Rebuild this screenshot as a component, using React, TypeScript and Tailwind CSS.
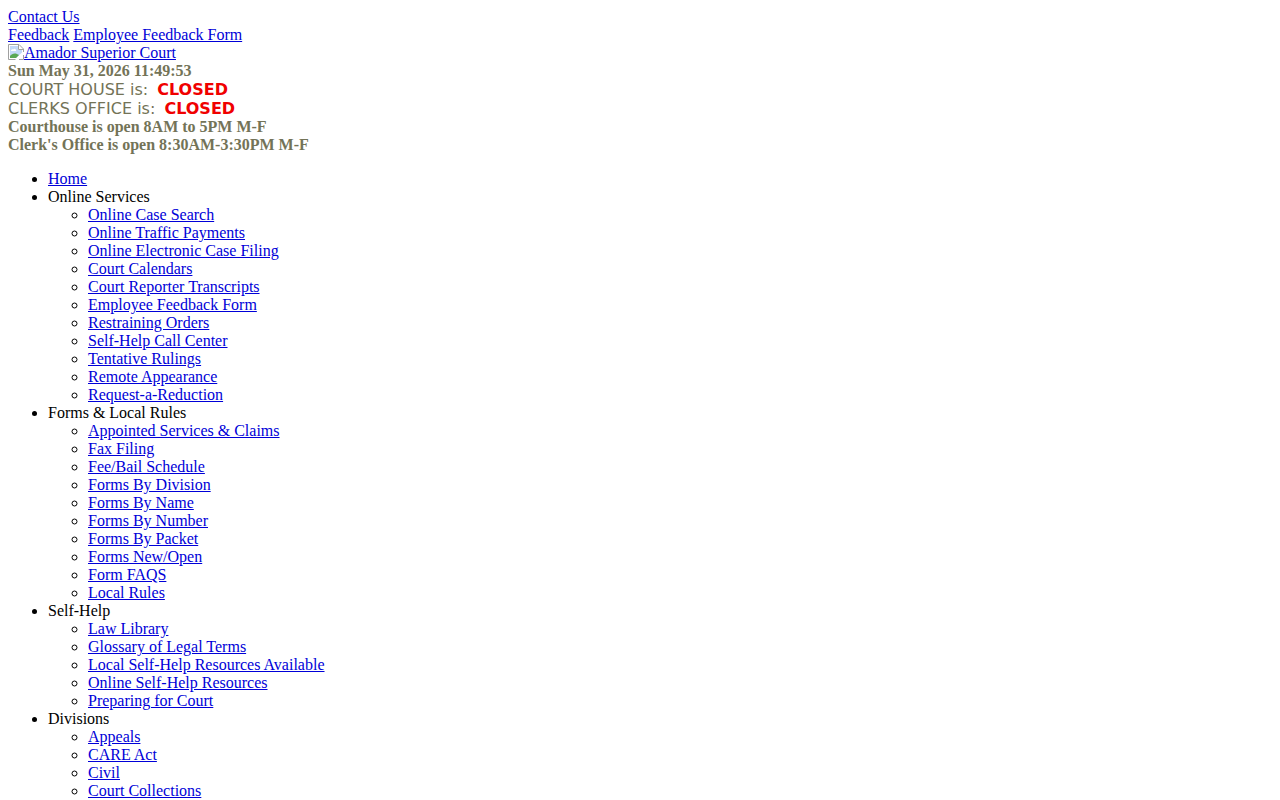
import React from "react";

type MenuSection = {
  title: string;
  href?: string;
  items?: string[];
};

const menu: MenuSection[] = [
  { title: "Home", href: "#home" },
  {
    title: "Online Services",
    items: [
      "Online Case Search",
      "Online Traffic Payments",
      "Online Electronic Case Filing",
      "Court Calendars",
      "Court Reporter Transcripts",
      "Employee Feedback Form",
      "Restraining Orders",
      "Self-Help Call Center",
      "Tentative Rulings",
      "Remote Appearance",
      "Request-a-Reduction",
    ],
  },
  {
    title: "Forms & Local Rules",
    items: [
      "Appointed Services & Claims",
      "Fax Filing",
      "Fee/Bail Schedule",
      "Forms By Division",
      "Forms By Name",
      "Forms By Number",
      "Forms By Packet",
      "Forms New/Open",
      "Form FAQS",
      "Local Rules",
    ],
  },
  {
    title: "Self-Help",
    items: [
      "Law Library",
      "Glossary of Legal Terms",
      "Local Self-Help Resources Available",
      "Online Self-Help Resources",
      "Preparing for Court",
    ],
  },
  {
    title: "Divisions",
    items: ["Appeals", "CARE Act", "Civil", "Court Collections"],
  },
];

const TextLink = ({
  href = "#",
  children,
}: {
  href?: string;
  children: React.ReactNode;
}) => (
  <a href={href} className="text-[#0000d8] underline">
    {children}
  </a>
);

const BrokenImageIcon = () => (
  <svg
    width="16"
    height="16"
    viewBox="0 0 16 16"
    className="inline-block align-top"
    aria-hidden="true"
  >
    <path d="M0.5 0.5H11L15.5 5V15.5H0.5Z" fill="#fff" />
    <path d="M2 2H10V6H14V8.5L8 14H2Z" fill="#c3d9f7" />
    <path d="M3 7C3 5.5 4.4 5 5.2 5.4C6 4 8.2 4.6 8.2 7Z" fill="#fff" />
    <path d="M2 14V12C4 9 8 8.5 11 11L8 14Z" fill="#5aa854" />
    <path d="M7.5 16L16 8V10.5L10.5 16Z" fill="#fff" />
    <path
      d="M7.5 15.5H0.5V0.5H11L15.5 5V8M10.5 0.5V5.5H15.5M15.5 11V15.5H11"
      fill="none"
      stroke="#a0a0a0"
    />
  </svg>
);

const StatusLine = ({ label, status }: { label: string; status: string }) => (
  <div className="font-[Verdana,'DejaVu_Sans',sans-serif] leading-[19px]">
    {label} is: <b className="ml-1 text-[#f00000]">{status}</b>
  </div>
);

const Header = () => (
  <header>
    <div>
      <TextLink href="#contact">Contact Us</TextLink>
    </div>
    <div>
      <TextLink href="#feedback">Feedback</TextLink>{" "}
      <TextLink href="#employee-feedback">Employee Feedback Form</TextLink>
    </div>
    <div>
      <TextLink href="#home">
        <BrokenImageIcon />
        Amador Superior Court
      </TextLink>
    </div>
    <div className="text-[#737357]">
      <div className="font-bold">Sun May 31, 2026 11:49:53</div>
      <StatusLine label="COURT HOUSE" status="CLOSED" />
      <StatusLine label="CLERKS OFFICE" status="CLOSED" />
      <div className="font-bold">Courthouse is open 8AM to 5PM M-F</div>
      <div className="font-bold">Clerk's Office is open 8:30AM-3:30PM M-F</div>
    </div>
  </header>
);

const App = () => {
  return (
    <div className="bg-white px-2 pt-2 font-['Liberation_Serif',serif] text-base leading-[18px] text-black">
      <Header />
      <nav className="mt-4">
        <ul className="list-disc pl-10">
          {menu.map((section) => (
            <li key={section.title}>
              {section.href ? (
                <TextLink href={section.href}>{section.title}</TextLink>
              ) : (
                section.title
              )}
              {section.items && (
                <ul className="list-[circle] pl-10">
                  {section.items.map((item) => (
                    <li key={item}>
                      <TextLink>{item}</TextLink>
                    </li>
                  ))}
                </ul>
              )}
            </li>
          ))}
        </ul>
      </nav>
    </div>
  );
};

export default App;
